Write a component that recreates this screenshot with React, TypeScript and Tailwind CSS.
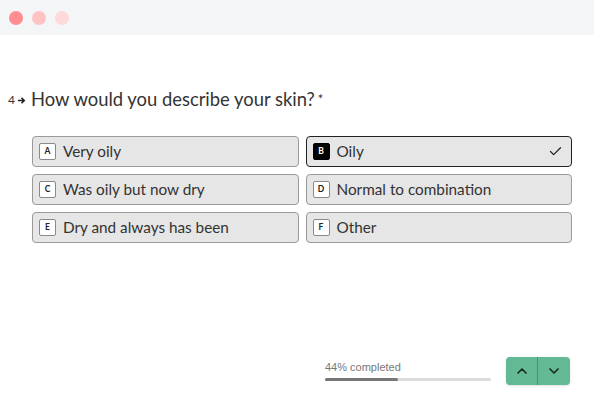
import React from "react";
import { Check, ChevronUp, ChevronDown } from "lucide-react";

const options = [
  { key: "A", label: "Very oily" },
  { key: "B", label: "Oily", selected: true },
  { key: "C", label: "Was oily but now dry" },
  { key: "D", label: "Normal to combination" },
  { key: "E", label: "Dry and always has been" },
  { key: "F", label: "Other" },
];

const App = () => {
  return (
    <div className="h-[405px] flex flex-col bg-white text-[#333] font-['Lato','Liberation_Sans',sans-serif]">
      {/* Window bar */}
      <div className="h-[35px] shrink-0 bg-[#f4f5f7] flex items-center gap-[9px] pl-[9px]">
        <span className="w-[14px] h-[14px] rounded-full bg-[#ff8d8f]" />
        <span className="w-[14px] h-[14px] rounded-full bg-[#ffc3c4]" />
        <span className="w-[14px] h-[14px] rounded-full bg-[#ffd9da]" />
      </div>

      {/* Question */}
      <div className="mt-[52px] pl-[8px] flex items-center">
        <span className="text-[12px] text-[#333] leading-none mt-[2px]">4</span>
        <svg width="9" height="9" viewBox="0 0 10 10" className="ml-[2px] mt-[2px]">
          <path d="M1 5h6.5M5 2l3 3-3 3" stroke="#222" strokeWidth="1.8" fill="none" />
        </svg>
        <h1 className="ml-[5px] text-[18.4px] leading-[24px] text-[#333]">
          How would you describe your skin?
          <span className="text-[13px] align-top ml-[3px]">*</span>
        </h1>
      </div>

      {/* Options */}
      <div className="mt-[25px] ml-[32px] w-[540px] grid grid-cols-2 gap-x-[7px] gap-y-[7px]">
        {options.map((o) => (
          <div
            key={o.key}
            className={
              "h-[31px] rounded-[4px] bg-[#e6e6e6] flex items-center pl-[6px] pr-[8px] border " +
              (o.selected ? "border-[#222] border-[1.5px]" : "border-[#9a9a9a]")
            }
          >
            <span
              className={
                "w-[17px] h-[17px] rounded-[2px] flex items-center justify-center text-[8.5px] font-bold border " +
                (o.selected ? "bg-black text-white border-black" : "bg-white text-[#222] border-[#8a8a8a]")
              }
            >
              {o.key}
            </span>
            <span className="ml-[7px] text-[15.3px] leading-none text-[#333]">{o.label}</span>
            {o.selected && <Check className="ml-auto w-[15px] h-[15px] text-[#222]" strokeWidth={2} />}
          </div>
        ))}
      </div>

      {/* Footer */}
      <div className="mt-auto mb-[20px] flex items-center justify-end pr-[24px]">
        <div className="w-[166px] mr-[15px]">
          <div className="text-[11px] text-[#777] leading-none font-['Liberation_Sans',sans-serif]">44% completed</div>
          <div className="mt-[5px] h-[3px] rounded-full bg-[#dcdcdc]">
            <div className="h-full rounded-full bg-[#777]" style={{ width: "44%" }} />
          </div>
        </div>
        <div className="flex h-[28px] rounded-[4px] bg-[#62b993] shadow-sm">
          <button className="w-[32px] flex items-center justify-center border-r border-[#3f9a72]">
            <ChevronUp className="w-[16px] h-[16px] text-[#1b2a22]" strokeWidth={2.5} />
          </button>
          <button className="w-[32px] flex items-center justify-center">
            <ChevronDown className="w-[16px] h-[16px] text-[#1b2a22]" strokeWidth={2.5} />
          </button>
        </div>
      </div>
    </div>
  );
};

export default App;
